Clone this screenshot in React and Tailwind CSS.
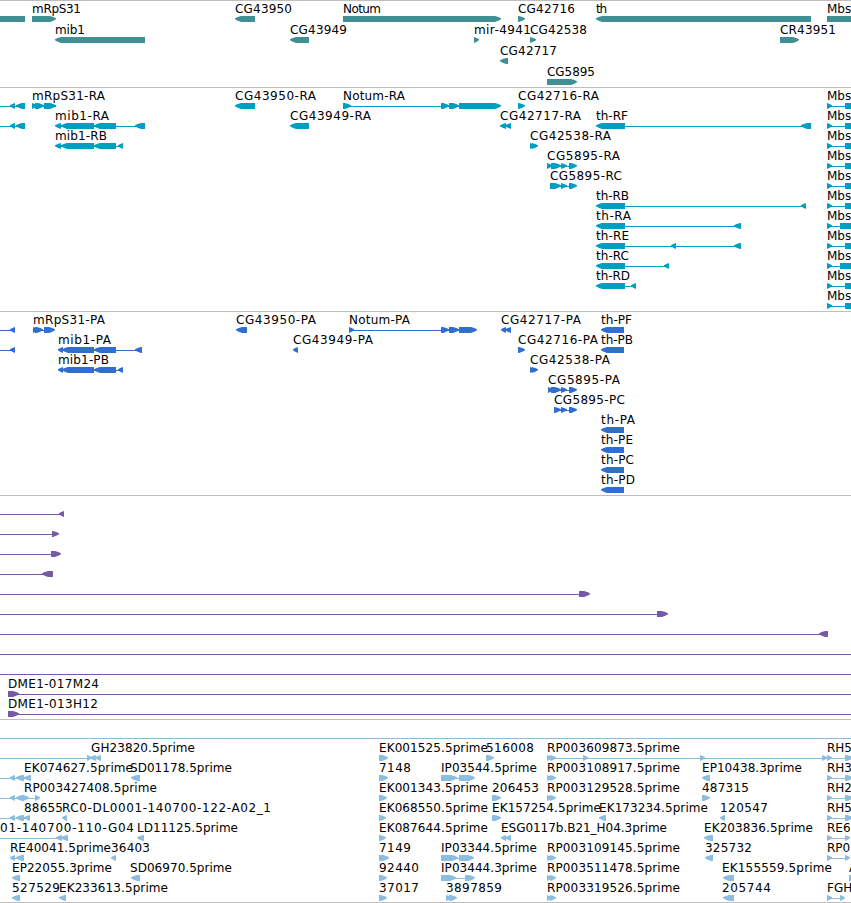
import React from 'react';
import clsx from 'clsx';

// One feature: [label, labelX, labelWidth, direction, blocks, lineStart, lineEnd]
// A block is [start, end, direction?]; direction is 'R', 'L' or '-' (no head).
const mbs = (start = 845) => ['Mbs', 827, 0, 'R', [[827, 832], [start, 851, '-']], 827, 851];
const edge = (name, start = 845, end = 853) => [name, 827, 0, 'R', [[827, 832], [start, end]], 827, end - 3];
const rp = (name) => [name, 547, 133, 'R', [[547, 552], [550, 556]]];

const genes = [
  [
    ['', 0, 0, '-', [[0, 25]]],
    ['mRpS31', 32, 49, 'R', [[32, 56]]],
    ['CG43950', 235, 57, 'L', [[235, 255]]],
    ['Notum', 343, 38, 'R', [[343, 501]]],
    ['CG42716', 518, 57, 'R', [[518, 525]]],
    ['th', 596, 11, 'L', [[596, 811]]],
    ['Mbs', 827, 0, '-', [[827, 851]]],
  ],
  [
    ['mib1', 55, 30, 'L', [[55, 145]]],
    ['CG43949', 290, 57, 'L', [[290, 309]]],
    ['mir-4941', 474, 57, 'R', [[474, 479]]],
    ['CG42538', 530, 57, 'R', [[530, 536]]],
    ['CR43951', 780, 56, 'R', [[780, 799]]],
  ],
  [['CG42717', 500, 57, 'L', [[500, 508]]]],
  [['CG5895', 547, 48, 'R', [[547, 577]]]],
];

const transcripts = [
  [
    ['', 0, 0, 'L', [[10, 15], [16, 25]], 0, 25],
    ['mRpS31-RA', 32, 73, 'R', [[32, 37], [35, 44], [44, 56]], 32, 56],
    ['CG43950-RA', 235, 81, 'L', [[235, 255]]],
    ['Notum-RA', 343, 62, 'R', [[343, 351], [441, 449], [449, 459], [459, 501]], 343, 500],
    ['CG42716-RA', 518, 81, 'R', [[518, 525]]],
    mbs(),
  ],
  [
    ['', 0, 0, 'L', [[10, 15], [16, 25]], 0, 25],
    ['mib1-RA', 55, 54, 'L', [[55, 61], [61, 94], [94, 116], [135, 145]], 56, 145],
    ['CG43949-RA', 290, 81, 'L', [[290, 309]]],
    ['CG42717-RA', 500, 81, 'L', [[500, 506], [505, 511]]],
    ['th-RF', 596, 32, 'L', [[596, 625], [801, 811]], 597, 811],
    mbs(),
  ],
  [
    ['mib1-RB', 55, 52, 'L', [[55, 61], [61, 94], [94, 116], [118, 123]], 56, 123],
    ['CG42538-RA', 530, 81, 'R', [[530, 535], [532, 538]]],
    mbs(),
  ],
  [['CG5895-RA', 547, 73, 'R', [[547, 552], [551, 561], [561, 567], [569, 577]], 547, 576], mbs()],
  [['CG5895-RC', 550, 72, 'R', [[550, 561], [561, 567], [569, 577]], 550, 576], mbs()],
  [['th-RB', 596, 33, 'L', [[596, 625], [801, 806]], 597, 806], mbs()],
  [['th-RA', 596, 35, 'L', [[596, 625], [734, 741]], 597, 741], mbs(840)],
  [['th-RE', 596, 33, 'L', [[596, 625], [671, 676], [734, 741]], 597, 741], mbs()],
  [['th-RC', 596, 33, 'L', [[596, 625], [664, 669]], 597, 669], mbs(840)],
  [['th-RD', 596, 34, 'L', [[596, 625], [631, 636]], 597, 636], mbs()],
  [mbs()],
];

const thProtein = (name, w) => [name, 601, w, 'L', [[601, 624]]];

const proteins = [
  [
    ['', 0, 0, 'L', [[10, 15]], 0, 15],
    ['mRpS31-PA', 33, 72, 'R', [[33, 38], [35, 43], [44, 55]], 33, 54],
    ['CG43950-PA', 236, 80, 'L', [[236, 247]]],
    ['Notum-PA', 349, 61, 'R', [[349, 354], [441, 449], [449, 459], [459, 477]], 349, 476],
    ['CG42717-PA', 501, 80, 'L', [[501, 506], [505, 511]]],
    thProtein('th-PF', 31),
  ],
  [
    ['', 0, 0, 'L', [[10, 15]], 0, 15],
    ['mib1-PA', 58, 53, 'L', [[58, 63], [62, 94], [94, 116], [135, 142]], 59, 142],
    ['CG43949-PA', 293, 80, 'L', [[293, 298]]],
    ['CG42716-PA', 518, 80, 'R', [[518, 525]]],
    thProtein('th-PB', 32),
  ],
  [
    ['mib1-PB', 58, 51, 'L', [[58, 63], [62, 94], [94, 116], [118, 123]], 59, 123],
    ['CG42538-PA', 530, 80, 'R', [[530, 535], [532, 538]]],
  ],
  [['CG5895-PA', 548, 72, 'R', [[548, 553], [551, 561], [561, 567], [569, 577]], 548, 576]],
  [['CG5895-PC', 554, 71, 'R', [[554, 561], [561, 567], [569, 577]], 554, 576]],
  [thProtein('th-PA', 34)],
  [thProtein('th-PE', 32)],
  [thProtein('th-PC', 33)],
  [thProtein('th-PD', 34)],
];

const bacs = [
  [['', 0, 0, 'L', [[59, 64]], 0, 64]],
  [['', 0, 0, 'R', [[52, 59]], 0, 58]],
  [['', 0, 0, 'R', [[51, 61]], 0, 60]],
  [['', 0, 0, 'L', [[42, 53]], 0, 52]],
  [['', 0, 0, 'R', [[579, 590]], 0, 589]],
  [['', 0, 0, 'R', [[657, 668]], 0, 667]],
  [['', 0, 0, 'L', [[819, 828]], 0, 827]],
  [['', 0, 0, 'R', [], 0, 851]],
  [['', 0, 0, 'R', [], 0, 851]],
  [['DME1-017M24', 8, 91, 'R', [[8, 19]], 8, 851]],
  [['DME1-013H12', 8, 90, 'R', [[8, 19]], 8, 851]],
];

const ests = [
  [
    ['GH23820.5prime', 91, 104, 'L', [[87, 92, 'R'], [90, 96], [95, 101]], 0, 100],
    ['EK001525.5prime', 379, 109, 'R', [[379, 388]]],
    ['516008', 486, 48, 'R', [[486, 494]]],
    ['RP003609873.5prime', 547, 133, 'R', [[547, 552], [550, 556], [583, 588], [700, 705], [822, 827]], 547, 827],
    edge('RH5'),
  ],
  [
    ['EK074627.5prime', 24, 109, 'L', [[10, 15], [16, 24], [24, 31]], 0, 30],
    ['SD01178.5prime', 130, 102, 'L', [[131, 140]]],
    ['7148', 379, 32, 'R', [[379, 388]]],
    ['IP03544.5prime', 441, 96, 'R', [[441, 457], [459, 475]], 441, 473],
    rp('RP003108917.5prime'),
    ['EP10438.3prime', 702, 100, 'L', [[702, 710]]],
    edge('RH3'),
  ],
  [
    ['RP003427408.5prime', 24, 133, 'L', [[10, 15], [16, 24], [22, 29, 'R'], [35, 40, 'R']], 0, 39],
    ['EK001343.5prime', 379, 109, 'R', [[379, 387]]],
    ['206453', 492, 47, 'R', [[492, 501]]],
    rp('RP003129528.5prime'),
    ['487315', 702, 47, 'R', [[702, 710]]],
    edge('RH2'),
  ],
  [
    ['88655', 24, 39, 'L', [[10, 15], [16, 24], [24, 30]], 0, 30],
    ['RC0-DL0001-140700-122-A02_1', 62, 209, 'L', [[62, 67]]],
    ['EK068550.5prime', 379, 109, 'R', [[379, 386]]],
    ['EK157254.5prime', 492, 109, 'R', [[492, 501]]],
    ['EK173234.5prime', 599, 109, 'L', [[599, 606]]],
    ['120547', 720, 48, 'L', [[720, 725]]],
    edge('RH5'),
  ],
  [
    ['01-140700-110-G04', 0, 134, 'L', [[56, 62], [61, 68]], 0, 68],
    ['LD11125.5prime', 137, 101, 'L', [[137, 144]]],
    ['EK087644.5prime', 379, 109, 'R', [[379, 386]]],
    ['ESG0117b.B21_H04.3prime', 501, 166, 'L', [[501, 506], [505, 511]]],
    ['EK203836.5prime', 704, 109, 'L', [[704, 713]]],
    edge('RE6', 845, 850),
  ],
  [
    ['RE40041.5prime', 10, 101, 'L', [[10, 15], [16, 24]], 11, 24],
    ['36403', 111, 39, 'L', [[111, 116]]],
    ['7149', 379, 32, 'R', [[379, 389]]],
    ['IP03344.5prime', 441, 96, 'R', [[441, 458], [459, 474]], 441, 473],
    rp('RP003109145.5prime'),
    ['325732', 705, 47, 'L', [[705, 713]]],
    edge('RP0', 845, 850),
  ],
  [
    ['EP22055.3prime', 12, 100, 'L', [[12, 20]]],
    ['SD06970.5prime', 130, 102, 'L', [[131, 140]]],
    ['92440', 379, 40, 'R', [[379, 387]]],
    ['IP03444.3prime', 441, 96, 'R', [[441, 456], [465, 475]], 441, 473],
    rp('RP003511478.5prime'),
    ['EK155559.5prime', 722, 110, 'L', [[723, 734]]],
    ['A', 849, 0, '-', [[849, 851]]],
  ],
  [
    ['527529', 12, 48, 'L', [[12, 20]]],
    ['EK233613.5prime', 59, 109, 'L', [[59, 66]]],
    ['37017', 379, 40, 'R', [[379, 387]]],
    ['3897859', 446, 56, 'R', [[446, 451], [449, 457]]],
    rp('RP003319526.5prime'),
    ['205744', 722, 49, 'L', [[723, 734]]],
    edge('FGH', 840, 845),
  ],
];

const outline = (start, end, dir) => {
  if (dir === '-') {
    return `${start},14 ${end},14 ${end},20 ${start},20`;
  }
  // slightly convex head, longer on wide blocks
  const head = Math.min(6, end - start);
  const [back, tip, sign] = dir === 'R' ? [start, end, -1] : [end, start, 1];
  const neck = tip + sign * head;
  const mid = tip + sign * head * 0.45;
  return `${back},14 ${neck},14 ${mid},15 ${tip},16.3 ${tip},17.2 ${mid},18.7 ${neck},20 ${back},20`;
};

const Feature = ({ data }) => {
  const [label, x, width, dir, blocks, lineStart, lineEnd] = data;

  return (
    <g>
      {lineEnd && (
        <rect x={lineStart} y="17" width={lineEnd - lineStart} height="1" fill="currentColor" />
      )}
      {blocks.map(([start, end, own], i) => (
        <polygon key={i} points={outline(start, end, own || dir)} fill="currentColor" />
      ))}
      {label && (
        <text x={x} y="11" className="fill-black" {...(width ? { textLength: width } : {})}>
          {label}
        </text>
      )}
    </g>
  );
};

const Track = ({ name, rows, className, rowClass = 'h-5' }) => (
  <section aria-label={name} className={clsx('flex flex-col', className)}>
    {rows.map((features, i) => (
      <svg key={i} className={clsx('block w-[851px] shrink-0', rowClass)}>
        {features.map((data, j) => (
          <Feature key={j} data={data} />
        ))}
      </svg>
    ))}
  </section>
);

const App = () => {
  return (
    <main className="w-[851px] h-[903px] overflow-hidden bg-white font-['DejaVu_Sans',sans-serif] text-[12px]">
      <Track
        name="Genes"
        rows={genes}
        rowClass="h-[21px]"
        className="border-t border-t-[#bebebe] py-px text-[#3f8f94]"
      />
      <Track
        name="Transcripts"
        rows={transcripts}
        className="border-t border-t-[#bebebe] pt-px pb-0.5 text-[#009fc1]"
      />
      <Track
        name="Proteins"
        rows={proteins}
        className="border-t border-t-[#bebebe] pt-px pb-0.5 text-[#316ece]"
      />
      <Track
        name="BACs"
        rows={bacs}
        className="border-y border-y-[#bebebe] pt-px pb-0.5 text-[#7759a8]"
      />
      <Track
        name="ESTs"
        rows={ests}
        className="mt-[18px] border-t border-t-[#89bbdc] border-b border-b-[#bebebe] pt-0.5 pb-px text-[#8abddf]"
      />
    </main>
  );
};

export default App;
